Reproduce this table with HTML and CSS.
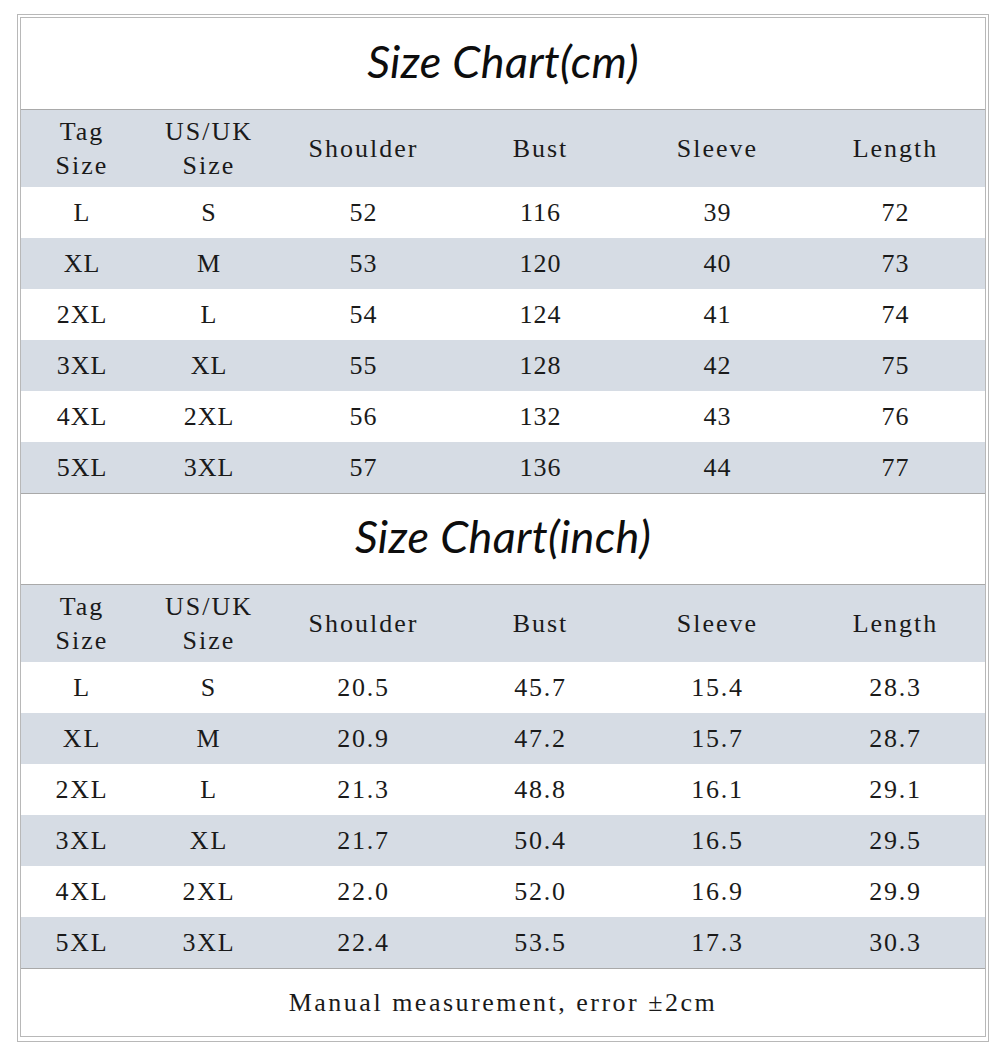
FILE: index.html
```html
<!DOCTYPE html>
<html lang="en">
<head>
<meta charset="utf-8">
<title>Size Chart</title>
<link rel="stylesheet" href="styles.css">
</head>
<body>
<div class="frame">
  <div class="inner">
    <div class="title">Size Chart(cm)</div>
    <div class="row head">
      <div class="cell">Tag<br>Size</div>
      <div class="cell">US/UK<br>Size</div>
      <div class="cell">Shoulder</div>
      <div class="cell">Bust</div>
      <div class="cell">Sleeve</div>
      <div class="cell">Length</div>
    </div>
    <div class="row"><div class="cell">L</div><div class="cell">S</div><div class="cell">52</div><div class="cell">116</div><div class="cell">39</div><div class="cell">72</div></div>
    <div class="row alt"><div class="cell">XL</div><div class="cell">M</div><div class="cell">53</div><div class="cell">120</div><div class="cell">40</div><div class="cell">73</div></div>
    <div class="row"><div class="cell">2XL</div><div class="cell">L</div><div class="cell">54</div><div class="cell">124</div><div class="cell">41</div><div class="cell">74</div></div>
    <div class="row alt"><div class="cell">3XL</div><div class="cell">XL</div><div class="cell">55</div><div class="cell">128</div><div class="cell">42</div><div class="cell">75</div></div>
    <div class="row"><div class="cell">4XL</div><div class="cell">2XL</div><div class="cell">56</div><div class="cell">132</div><div class="cell">43</div><div class="cell">76</div></div>
    <div class="row alt"><div class="cell">5XL</div><div class="cell">3XL</div><div class="cell">57</div><div class="cell">136</div><div class="cell">44</div><div class="cell">77</div></div>

    <div class="title second">Size Chart(inch)</div>
    <div class="row head">
      <div class="cell">Tag<br>Size</div>
      <div class="cell">US/UK<br>Size</div>
      <div class="cell">Shoulder</div>
      <div class="cell">Bust</div>
      <div class="cell">Sleeve</div>
      <div class="cell">Length</div>
    </div>
    <div class="row dec"><div class="cell">L</div><div class="cell">S</div><div class="cell">20.5</div><div class="cell">45.7</div><div class="cell">15.4</div><div class="cell">28.3</div></div>
    <div class="row dec alt"><div class="cell">XL</div><div class="cell">M</div><div class="cell">20.9</div><div class="cell">47.2</div><div class="cell">15.7</div><div class="cell">28.7</div></div>
    <div class="row dec"><div class="cell">2XL</div><div class="cell">L</div><div class="cell">21.3</div><div class="cell">48.8</div><div class="cell">16.1</div><div class="cell">29.1</div></div>
    <div class="row dec alt"><div class="cell">3XL</div><div class="cell">XL</div><div class="cell">21.7</div><div class="cell">50.4</div><div class="cell">16.5</div><div class="cell">29.5</div></div>
    <div class="row dec"><div class="cell">4XL</div><div class="cell">2XL</div><div class="cell">22.0</div><div class="cell">52.0</div><div class="cell">16.9</div><div class="cell">29.9</div></div>
    <div class="row dec alt"><div class="cell">5XL</div><div class="cell">3XL</div><div class="cell">22.4</div><div class="cell">53.5</div><div class="cell">17.3</div><div class="cell">30.3</div></div>

    <div class="footer">Manual measurement, error ±2cm</div>
  </div>
</div>
</body>
</html>
```

FILE: styles.css
```css
html, body {
  margin: 0;
  padding: 0;
  background: #ffffff;
}

body {
  padding: 14px 0 0 17px;
  font-family: "Liberation Serif", "Times New Roman", serif;
  color: #1a1a1a;
}

.frame {
  width: 966px;
  height: 1022px;
  border: 1px solid #b8b8b8;
  padding: 2px;
}

.inner {
  height: 1018px;
  border: 1px solid #b8b8b8;
  display: flex;
  flex-direction: column;
}

.title {
  height: 92px;
  box-sizing: border-box;
  padding-bottom: 6px;
  border-bottom: 1px solid #a9a9a9;
  display: flex;
  align-items: center;
  justify-content: center;
  font-family: "Lato", "Open Sans", sans-serif;
  font-style: italic;
  font-size: 45px;
  color: #0d0d0d;
  letter-spacing: 0.3px;
}

.title.second {
  border-top: 1px solid #a9a9a9;
  height: 92px;
}

.row {
  display: grid;
  grid-template-columns: 122px 132px 177px 177px 177px 1fr;
  height: 51px;
  font-size: 26px;
  letter-spacing: 1px;
}

.row.dec {
  letter-spacing: 1.8px;
}

.row.head {
  height: 77px;
  background: #d6dce4;
  letter-spacing: 2px;
  line-height: 34px;
}

.row.alt {
  background: #d6dce4;
}

.cell {
  display: flex;
  align-items: center;
  justify-content: center;
  text-align: center;
}

.footer {
  flex: 1;
  border-top: 1px solid #a9a9a9;
  display: flex;
  align-items: center;
  justify-content: center;
  font-size: 26px;
  letter-spacing: 2.5px;
}
```
